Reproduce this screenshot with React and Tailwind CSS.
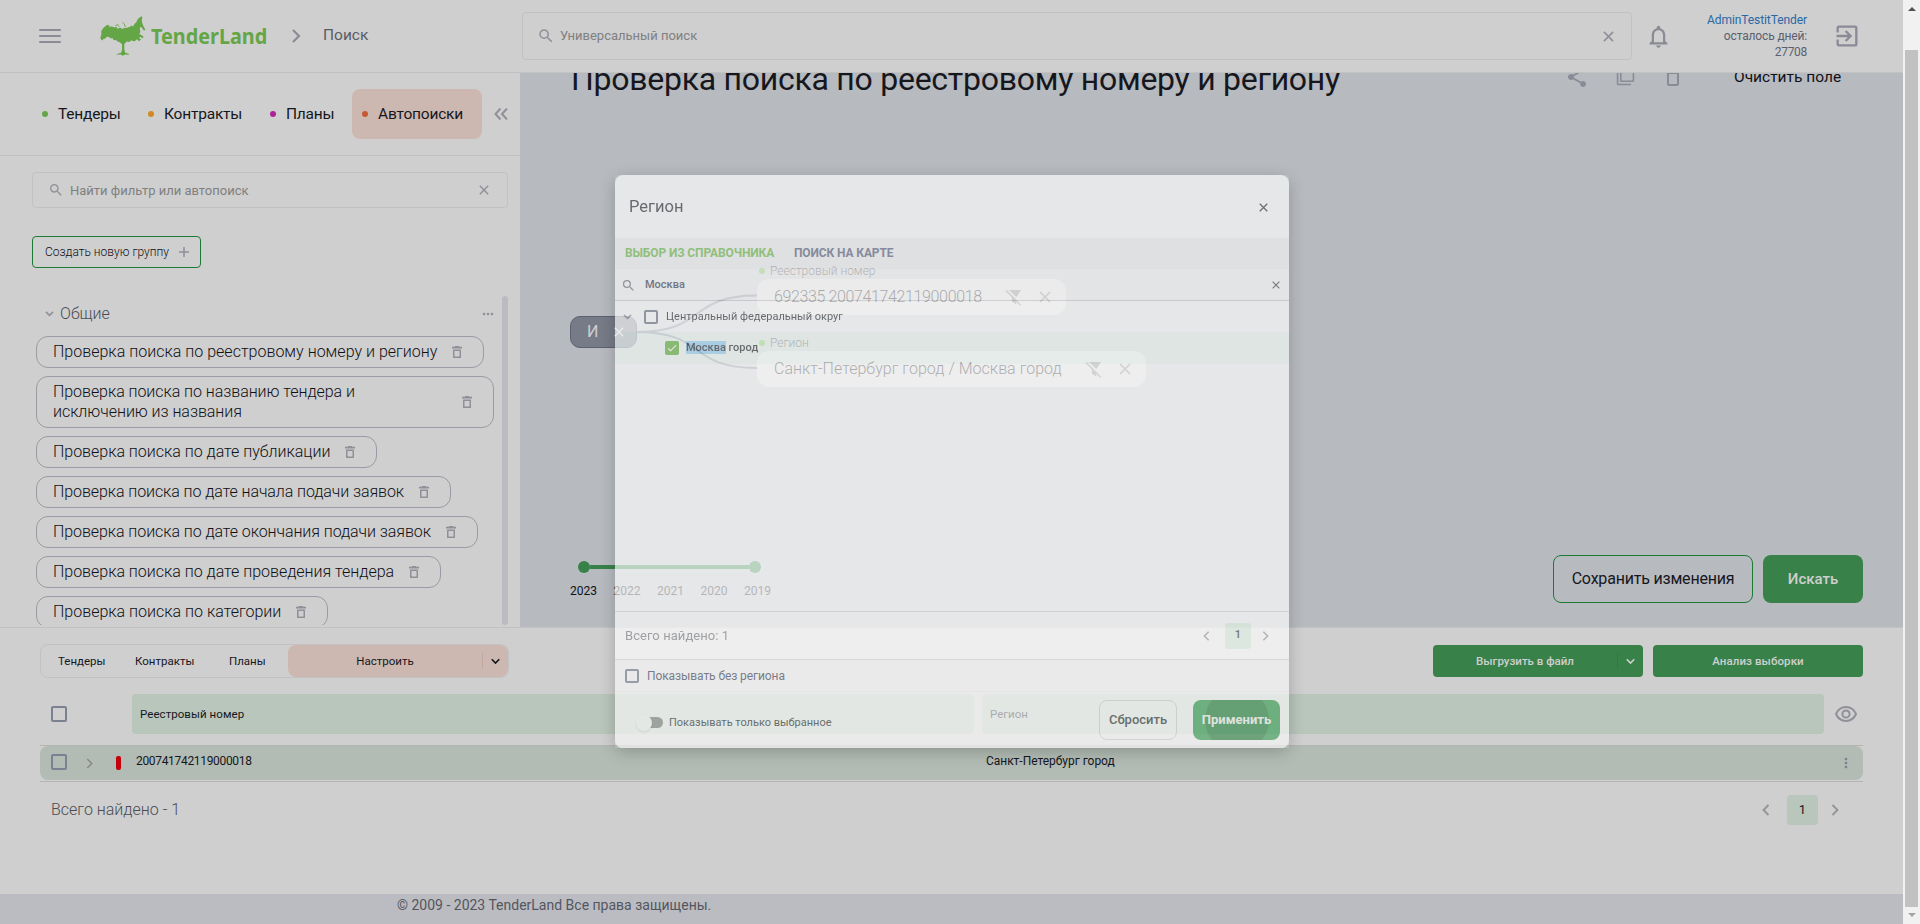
import React from 'react';
import { MdSearch, MdDeleteOutline, MdShare, MdFilterNone, MdExitToApp, MdNotificationsNone, MdMoreHoriz, MdMoreVert, MdCheck } from 'react-icons/md';

function Chevron({ dir = 'right', className = '' }) {
  const d = { right: 'M3 1 L9 7 L3 13', left: 'M9 1 L3 7 L9 13', down: 'M1 4 L6 9 L11 4' }[dir];
  return (
    <svg viewBox="0 0 12 14" fill="none" stroke="currentColor" strokeWidth="2.2" className={className}>
      <path d={d} />
    </svg>
  );
}

function Cross({ className = '' }) {
  return (
    <svg viewBox="0 0 12 12" fill="none" stroke="currentColor" strokeWidth="1.7" className={className}>
      <path d="M1 1 L11 11 M11 1 L1 11" />
    </svg>
  );
}

function FilterOff({ className = '' }) {
  return (
    <svg viewBox="0 0 18 18" className={className}>
      <path d="M4.200 1 H17 L11.900 8.600 Z" fill="currentColor" />
      <path d="M7.300 8.300 L11.800 13.200 V16.200 L7.300 13.400 Z" fill="currentColor" />
      <path d="M1.200 1.600 L16.400 17.200" stroke="currentColor" strokeWidth="1.7" />
    </svg>
  );
}

function Trash({ className = '' }) {
  return (
    <svg viewBox="0 0 10 12" fill="none" stroke="currentColor" strokeWidth="1.500" className={className}>
      <path d="M0 1.600 H10" strokeWidth="1.800" />
      <path d="M3 0.500 H7" strokeWidth="1" />
      <rect x="1.750" y="4.250" width="6.500" height="7" />
    </svg>
  );
}

function TreeLogo() {
  return (
    <svg viewBox="30 35 140 120" className="h-10 w-[46px] shrink-0 fill-[#64a646]">
      <path d="M31 99 L34 92 L34 80 L40 71 L48 64 L54 61 L58 63 L57 67 L66 66 L74 69 L80 67 L84 74 L91 69 L97 74 L104 71 L113 70 L121 67 L126 63 L131 66 L135 58 L140 54 L145 43 L151 39 L156 35 L159 38 L157 47 L159 57 L163 67 L168 75 L164 79 L158 71 L154 66 L151 73 L153 83 L149 89 L156 92 L163 98 L158 102 L153 97 L149 101 L155 106 L149 111 L142 105 L137 110 L131 111 L126 108 L119 113 L112 112 L106 117 L104 122 L104 137 L107 146 L117 149 L119 152 L106 151 L99 155 L93 151 L80 152 L84 149 L94 146 L97 138 L97 120 L90 114 L83 112 L80 108 L71 107 L69 102 L61 102 L57 97 L50 98 L45 103 L40 104 L38 109 L33 106 Z" />
      <path d="M76 64 L84 60 L88 67 M98 54 L104 58 L107 68" fill="none" stroke="#64a646" strokeWidth="2.5" />
    </svg>
  );
}

function Header() {
  return (
    <header className="flex h-[73px] shrink-0 items-center border-b border-[#c2c2c3] bg-[#cfcfcf] text-[#8a8b95]">
      <div className="ml-[39px] flex w-[22px] flex-col gap-[4px]">
        <i className="h-[2px] rounded bg-[#8a8b95]" />
        <i className="h-[2px] rounded bg-[#8a8b95]" />
        <i className="h-[2px] rounded bg-[#8a8b95]" />
      </div>
      <div className="ml-[39px] flex w-[168px] items-center">
        <TreeLogo />
        <span className="ml-[5px] origin-left scale-x-[0.9] pb-[2px] font-['Noto_Sans',sans-serif] text-[22px] leading-6 font-bold text-[#64a646]">TenderLand</span>
      </div>
      <Chevron className="ml-[22px] h-[14px] w-3" />
      <span className="ml-[21px] w-[199px] pb-px text-[15.5px] text-[#5b5d66]">Поиск</span>
      <div className="flex h-12 w-[1110px] items-center rounded border border-[#c2c2c3] pr-[17px] pl-[14px] text-[#808080]">
        <MdSearch className="h-[18px] w-[18px] text-[#8f9098]" />
        <span className="ml-[5px] grow text-[13px]">Универсальный поиск</span>
        <Cross className="h-[11px] w-[11px] text-[#8f9098]" />
      </div>
      <MdNotificationsNone className="ml-[13px] h-[27px] w-[27px]" />
      <div className="ml-[21px] w-[114px] text-right text-[12px] leading-4 tracking-[-0.15px] text-[#5b6070]">
        <div className="tracking-[-0.08px] text-[#2968a5]">AdminTestitTender</div>
        <div>осталось дней:</div>
        <div className="tracking-[-0.3px]">27708</div>
      </div>
      <MdExitToApp className="mb-px ml-[26px] h-[28px] w-[28px]" />
    </header>
  );
}

const savedSearches = [
  { text: 'Проверка поиска по реестровому номеру и региону', tracking: 'tracking-[0.015px]' },
  { text: 'Проверка поиска по названию тендера и исключению из названия', tracking: 'tracking-[-0.06px]' },
  { text: 'Проверка поиска по дате публикации', tracking: 'tracking-[-0.02px]' },
  { text: 'Проверка поиска по дате начала подачи заявок', tracking: 'tracking-[-0.09px]' },
  { text: 'Проверка поиска по дате окончания подачи заявок', tracking: 'tracking-[-0.08px]' },
  { text: 'Проверка поиска по дате проведения тендера', tracking: 'tracking-[-0.02px]' },
  { text: 'Проверка поиска по категории', tracking: 'tracking-normal' },
];

function Tab({ dot, label, className }) {
  return (
    <div className={`flex h-[50px] items-center rounded-lg ${className}`}>
      <i className={`mr-[10px] h-[6px] w-[6px] rounded-full ${dot}`} />
      <span className="pt-[2px] tracking-[-0.2px]">{label}</span>
    </div>
  );
}

function Sidebar() {
  return (
    <aside className="flex w-[520px] shrink-0 flex-col bg-[#cfcfcf]">
      <nav className="flex h-[83px] shrink-0 items-center border-b border-[#c2c2c3] text-[15.5px] text-[#16171d]">
        <Tab dot="bg-[#64a646]" label="Тендеры" className="ml-[42px] w-[106px]" />
        <Tab dot="bg-[#d28a22]" label="Контракты" className="w-[122px]" />
        <Tab dot="bg-[#ab2299]" label="Планы" className="w-[82px]" />
        <Tab dot="bg-[#c45a35]" label="Автопоиски" className="w-[130px] bg-[#cdb8b1] pl-[10px]" />
        <svg viewBox="0 0 14 12" className="ml-3 h-3 w-[14px]" fill="none" stroke="#8f9098" strokeWidth="2">
          <path d="M6.5 0.5 L1.5 6 L6.5 11.5 M13 0.5 L8 6 L13 11.5" />
        </svg>
      </nav>
      <div className="mt-4 ml-8 flex h-9 w-[476px] shrink-0 items-center rounded border border-[#c2c2c3] pr-[18px] pl-[15px] text-[#808080]">
        <MdSearch className="h-4 w-4 text-[#8f9098]" />
        <span className="ml-[6px] grow pt-px text-[13px]">Найти фильтр или автопоиск</span>
        <Cross className="h-[10px] w-[10px] text-[#8f9098]" />
      </div>
      <button className="mt-7 ml-8 flex h-8 w-[169px] shrink-0 items-center rounded border border-[#1c7a35] pl-3 text-[12px] text-[#101116]">
        <span className="font-light">Создать новую группу</span>
        <svg viewBox="0 0 10 10" className="ml-[10px] h-[10px] w-[10px]" stroke="#8f9098" strokeWidth="1.6">
          <path d="M5 0 V10 M0 5 H10" />
        </svg>
      </button>
      <div className="mt-[28px] ml-9 flex h-[329px] w-[472px] gap-2 overflow-hidden">
        <div className="flex w-[458px] shrink-0 flex-col items-start gap-2">
          <div className="flex h-8 w-full shrink-0 items-center pt-1 text-[#4b4d56]">
            <Chevron dir="down" className="ml-[9px] h-[10px] w-[9px] text-[#8f9098]" />
            <span className="ml-[6px] grow text-[16px] font-light tracking-[0.05px]">Общие</span>
            <MdMoreHoriz className="mr-[-2px] h-4 w-4 text-[#8f9098]" />
          </div>
          {savedSearches.map((s) => (
            <div key={s.text} className="flex min-h-8 shrink-0 items-center rounded-xl border border-[#9a9ba3] py-[5px] pr-[21px] pl-[16px] text-[16px] leading-5 font-light text-[#101116]">
              <span className={s.tracking}>{s.text}</span>
              <Trash className="ml-[15px] h-3 w-[10px] shrink-0 text-[#8f9098]" />
            </div>
          ))}
        </div>
        <div className="h-full w-[6px] shrink-0 rounded bg-[#bbbcc1]" />
      </div>
    </aside>
  );
}

function FilterNode({ label, value, className, valueClass }) {
  return (
    <div className={`absolute left-[237px] ${className}`}>
      <div className="flex h-4 items-center gap-[5px] pl-[2px] text-[12px] text-[#2f3138]">
        <i className="h-[6px] w-[6px] rounded-full bg-[#64a646]" />
        <span className="font-light">{label}</span>
      </div>
      <div className="flex h-9 items-center rounded-xl bg-[#cfcfcf] pr-[15px] pl-[17px] text-[16px] font-light whitespace-nowrap text-[#101116]">
        <span className={valueClass}>{value}</span>
        <FilterOff className="ml-[23px] h-[17px] w-[17px] text-[#7f8088]" />
        <Cross className="ml-[17px] h-3 w-3 text-[#7f8088]" />
      </div>
    </div>
  );
}

function Canvas() {
  return (
    <section className="relative grow overflow-hidden bg-[#b7babf]">
      <div className="-mt-[14px] ml-[51px] flex h-10 items-center">
        <h1 className="w-[994px] text-[32px] leading-10 tracking-[-0.26px] whitespace-nowrap text-[#16171d]">Проверка поиска по реестровому номеру и региону</h1>
        <div className="-mt-[5px] flex items-center text-[#8a8b95]">
          <MdShare className="h-6 w-6" />
          <MdFilterNone className="ml-[27px] h-[19px] w-[19px]" />
          <MdDeleteOutline className="ml-[26px] h-6 w-6" />
          <span className="ml-[49px] text-[15.5px] leading-6 whitespace-nowrap text-[#101116]">Очистить поле</span>
        </div>
      </div>

      <svg className="absolute top-[212px] left-[117px] h-[90px] w-[122px]" fill="none" stroke="#777b8a" strokeWidth="2">
        <path d="M0 47 C70 47 50 10.5 120 10.5" />
        <path d="M0 47 C70 47 50 83 120 83" />
      </svg>
      <div className="absolute top-[243px] left-[50px] flex h-8 w-[67px] items-center rounded-[10px] border border-[#5d6072] bg-[#767b87] pl-[16px] text-[16px] text-[#cfcfcf]">
        <span className="w-[27px]">И</span>
      </div>
      <FilterNode label="Реестровый номер" value="692335 200741742119000018" className="top-[190px]" valueClass="tracking-[-0.37px]" />
      <FilterNode label="Регион" value="Санкт-Петербург город / Москва город" className="top-[262px]" valueClass="tracking-[0.02px]" />

      <div className="absolute top-[488px] left-[50px] w-[201px]">
        <div className="mr-[10px] ml-2 flex h-3 items-center justify-between">
          <i className="h-3 w-3 rounded-full bg-[#388249]" />
          <i className="h-1 grow bg-[#388249]" />
          <i className="h-3 w-3 rounded-full bg-[#388249]" />
        </div>
        <div className="mt-[10px] flex justify-between text-[12px] leading-4 text-[#2c2d33]">
          <span className="text-[#101116]">2023</span>
          <span>2022</span>
          <span>2021</span>
          <span>2020</span>
          <span>2019</span>
        </div>
      </div>

      <div className="mt-[456px] mr-10 flex justify-end gap-[10px] text-[16px]">
        <button className="h-12 w-[200px] rounded-lg border border-[#1c7a35] tracking-[-0.2px] text-[#16171d]">Сохранить изменения</button>
        <button className="h-12 w-[100px] rounded-lg bg-[#388249] text-[15px] font-medium text-[#cfcfcf]">Искать</button>
      </div>
    </section>
  );
}

function Box({ className = '' }) {
  return <i className={`block shrink-0 rounded-[2px] border-2 border-[#7a8190] ${className}`} />;
}

function Results() {
  return (
    <section className="flex h-[267px] shrink-0 flex-col border-t border-[#c2c2c3] bg-[#cfcfcf] pr-10 pl-10 text-[#16171d]">
      <div className="mt-4 flex h-[34px] shrink-0 items-center text-[11.5px]">
        <div className="flex h-[34px] w-[469px] items-center rounded-lg border border-[#c2c2c3] pl-[17px]">
          <span className="w-[77px] pt-px">Тендеры</span>
          <span className="w-[94px] pt-px">Контракты</span>
          <span className="w-[59px] pt-px">Планы</span>
          <div className="flex h-8 grow items-center rounded-lg bg-[#cdb8b1]">
            <span className="w-[194px] pt-px text-center">Настроить</span>
            <i className="h-4 w-px bg-[#c0a8a1]" />
            <Chevron dir="down" className="ml-[8px] h-[11px] w-[9px]" />
          </div>
        </div>
        <div className="ml-auto flex gap-[10px] text-[11.5px] font-medium text-[#cfcfcf]">
          <div className="flex h-8 w-[210px] items-center rounded bg-[#388249]">
            <span className="w-[184px] pt-px text-center">Выгрузить в файл</span>
            <i className="h-4 w-px bg-[#2f7a42]" />
            <Chevron dir="down" className="ml-[8px] h-[11px] w-[9px]" />
          </div>
          <div className="flex h-8 w-[210px] items-center justify-center rounded bg-[#388249] pt-px tracking-[0.08px]">Анализ выборки</div>
        </div>
      </div>
      <div className="mt-4 flex h-10 shrink-0 items-center text-[11.5px]">
        <Box className="ml-[11px] h-4 w-4" />
        <div className="ml-[65px] flex h-10 w-[842px] items-center rounded bg-[#b9c6bc] pt-px pl-2 tracking-[0.06px]">Реестровый номер</div>
        <div className="ml-2 flex h-10 w-[842px] items-center rounded bg-[#b9c6bc] pt-px pl-2">Регион</div>
        <svg viewBox="0 0 22 16" className="ml-[11px] h-4 w-[22px]" fill="none" stroke="#8f9098" strokeWidth="2">
          <path d="M1 8 C3 3.5 6.7 1 11 1 S19 3.5 21 8 C19 12.500 15.300 15 11 15 S3 12.500 1 8 Z" />
          <circle cx="11" cy="8" r="3.600" />
        </svg>
      </div>
      <div className="mt-[11px] flex h-[37px] shrink-0 flex-col justify-start border-y border-[#b3b4b5]">
        <div className="flex h-[34px] items-center rounded-lg bg-[#b2bcb4]">
          <Box className="mb-[2px] ml-[11px] h-4 w-4" />
          <Chevron className="ml-[18px] h-[11px] w-[9px] text-[#868c8c]" />
          <i className="ml-[22px] h-[14px] w-[5px] rounded-[2px] bg-[#c5000b]" />
          <span className="ml-[15px] w-[850px] pb-[5px] text-[12px] tracking-[-0.32px]">200741742119000018</span>
          <span className="pb-[5px] text-[12px] tracking-[-0.03px]">Санкт-Петербург город</span>
          <MdMoreVert className="mr-[9px] mb-px ml-auto h-4 w-4 text-[#7a8190]" />
        </div>
      </div>
      <div className="mt-3 flex h-8 shrink-0 items-center pl-[11px]">
        <span className="text-[16px] font-light text-[#4c4d50]">Всего найдено - 1</span>
        <Chevron dir="left" className="ml-auto h-[12px] w-[10px] text-[#929395]" />
        <span className="ml-4 flex h-[30px] w-[31px] items-center justify-center rounded bg-[#b9c6bc] text-[13px]">1</span>
        <Chevron className="mr-[23px] ml-[12px] h-[12px] w-[10px] text-[#929395]" />
      </div>
    </section>
  );
}

function RegionDialog() {
  return (
    <div className="absolute top-[175px] left-[615px] flex h-[573px] w-[674px] flex-col overflow-hidden rounded-lg bg-white text-[#3b3d42] opacity-65">
      <div className="flex h-[63px] shrink-0 items-center pt-px pr-[21px] pl-[14px]">
        <span className="grow pt-px text-[16.5px]">Регион</span>
        <Cross className="h-[9px] w-[9px] text-[#444]" />
      </div>
      <div className="flex h-[31px] shrink-0 items-center bg-[#f5f5f5] pb-[2px] pl-[10px] text-[12px] font-bold tracking-[-0.12px] text-[#79c257]">
        <span className="w-[169px]">ВЫБОР ИЗ СПРАВОЧНИКА</span>
        <span className="text-[#69708a]">ПОИСК НА КАРТЕ</span>
      </div>
      <div className="flex h-[32px] shrink-0 items-center border-b border-[#cfd0d3] bg-[#fafafa] pr-[9px] pl-[6px]">
        <MdSearch className="mt-[1px] h-[15px] w-[15px] text-[#7d8087]" />
        <span className="ml-[9px] grow pt-px text-[11px] font-medium text-[#4a5063]">Москва</span>
        <Cross className="h-2 w-2 text-[#555]" />
      </div>
      <div className="flex h-[31px] shrink-0 items-center text-[11px]">
        <Chevron dir="down" className="ml-2 h-[10px] w-[9px] text-[#a4a8b0]" />
        <Box className="ml-3 h-[14px] w-[14px]" />
        <span className="ml-2 pt-[2px]">Центральный федеральный округ</span>
      </div>
      <div className="flex h-8 shrink-0 items-center bg-[#f3fcf8] text-[11px]">
        <span className="ml-[50px] flex h-[14px] w-[14px] items-center justify-center rounded-[2px] bg-[#6fba4b]">
          <MdCheck className="h-3 w-3 text-white" />
        </span>
        <span className="ml-[7px] font-medium whitespace-pre">
          <span className="bg-[#a1d7f6]">Москва</span> город
        </span>
      </div>
      <div className="mt-[247px] flex h-[49px] shrink-0 items-center border-y border-[#dcdddf] text-[#85878b]">
        <span className="ml-[10px] grow text-[13px] tracking-[0.06px]">Всего найдено: 1</span>
        <Chevron dir="left" className="h-[10px] w-[9px] text-[#a4a6aa]" />
        <span className="ml-[14px] flex h-[26px] w-[26px] items-center justify-center rounded-[3px] bg-[#e3f6e8] text-[11px] font-medium text-[#444]">1</span>
        <Chevron className="mr-[19px] ml-[10px] h-[10px] w-[9px] text-[#a4a6aa]" />
      </div>
      <div className="flex h-8 shrink-0 items-center border-b border-[#f2f2f2] bg-[#f9f9f9] text-[12px] tracking-[-0.09px] text-[#4a5063]">
        <Box className="ml-[10px] h-[14px] w-[14px]" />
        <span className="ml-2">Показывать без региона</span>
      </div>
      <div className="flex grow items-center bg-[#f9f9f9] pr-[9px] text-[11px]">
        <span className="mt-[5px] ml-[24px] flex h-[11px] w-6 items-center rounded-full bg-[#909090]">
          <i className="-ml-[3px] h-4 w-4 rounded-full bg-[#fafafa] shadow" />
        </span>
        <span className="mt-[6px] ml-[6px] grow">Показывать только выбранное</span>
        <button className="h-10 w-[78px] rounded-lg border border-[#d5d6d8] text-[13px] font-medium">Сбросить</button>
        <button className="ml-[16px] flex h-10 w-[87px] items-center justify-center overflow-hidden rounded-lg bg-[#45a35e] text-[13px] font-bold text-[#f2f2f2]">
          <span className="flex h-16 w-16 shrink-0 items-center justify-center rounded-full bg-[#398a4e]">Применить</span>
        </button>
      </div>
    </div>
  );
}

export default function App() {
  return (
    <div className="relative flex h-[924px] w-[1920px] overflow-hidden font-['Roboto',sans-serif]">
      <div className="flex w-[1903px] flex-col">
        <Header />
        <div className="flex h-[554px] shrink-0">
          <Sidebar />
          <Canvas />
        </div>
        <Results />
        <footer className="h-[30px] bg-[#bbbcc1] pl-[397px] text-[14px] leading-[22px] text-[#54565e]">© 2009 - 2023 TenderLand Все права защищены.</footer>
      </div>
      <div className="flex w-[17px] flex-col items-center bg-[#f1f1f1]">
        <svg viewBox="0 0 8 4" className="mt-[7px] h-1 w-2 fill-[#505050]"><path d="M0 4 L4 0 L8 4 Z" /></svg>
        <div className="mt-[39px] h-[857px] w-[13px] bg-[#c1c1c1]" />
        <svg viewBox="0 0 8 4" className="mt-[6px] h-1 w-2 fill-[#a3a3a3]"><path d="M0 0 L4 4 L8 0 Z" /></svg>
      </div>
      <div className="absolute top-[175px] left-[615px] h-[573px] w-[674px] rounded-lg [clip-path:polygon(-40px_-40px,714px_-40px,714px_613px,-40px_613px,-40px_-40px,0px_0px,0px_573px,674px_573px,674px_0px,0px_0px)] shadow-[0_4px_16px_rgba(0,0,0,0.22)]" />
      <RegionDialog />
      <Cross className="absolute top-[327px] left-[614px] h-[10px] w-[10px] text-[#ececee]" />
    </div>
  );
}
